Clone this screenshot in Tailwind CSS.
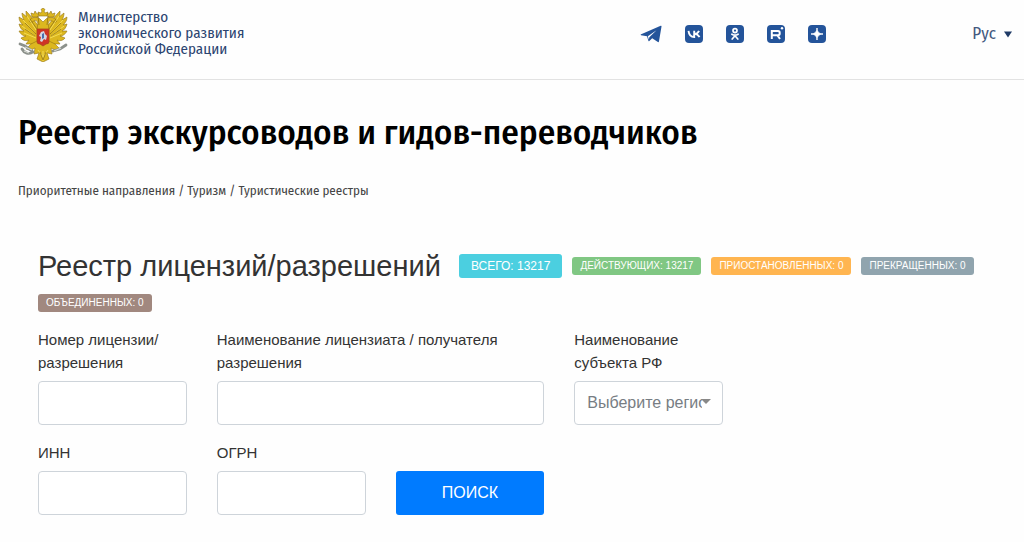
<!DOCTYPE html>
<html lang="ru">
<head>
  <meta charset="utf-8">
  <meta name="viewport" content="width=device-width, initial-scale=1">
  <title>Реестр экскурсоводов и гидов-переводчиков</title>
  <script src="https://cdn.jsdelivr.net/npm/@tailwindcss/browser@4"></script>
</head>
<body class="min-h-screen bg-[#fefefe] font-['Liberation_Sans',Arial,sans-serif] text-[#333]">

  <!-- Header -->
  <header class="flex h-20 items-start justify-between border-b border-[#e2e2e2] pr-3 pl-[18px] font-['Fira_Sans_Condensed','Fira_Sans','Noto_Sans',sans-serif]">
    <a href="#" class="flex items-start gap-2.5 pt-2 text-[#2b4470]">
      <svg class="h-[54px] w-[50px]" viewBox="0 0 50 54" aria-hidden="true">
        <g fill="#dcb71f" stroke="#937314" stroke-width=".6">
          <path d="M21 19C17 13 13 8 8 3C8 6 8 7 9 9L4 5C4 8 5 10 6 12L1 9C1 13 3 15 5 17L1 16C2 20 4 22 6 23L1 23C3 27 6 28 8 28L3 30C5 33 9 33 11 32L8 36L14 36L21 34Z"/>
          <path d="M29 19C33 13 37 8 42 3C42 6 42 7 41 9L46 5C46 8 45 10 44 12L49 9C49 13 47 15 45 17L49 16C48 20 46 22 44 23L49 23C47 27 44 28 42 28L47 30C45 33 41 33 39 32L42 36L36 36L29 34Z"/>
          <path d="M19 33L13 36L8 41L13 42L17 40L16 46L21 45L19 51L25 54L31 51L29 45L34 46L33 40L37 42L42 41L37 36L31 33Z"/>
          <path d="M20 24C18 19 21 16 19 13C17 12 15 13 13 15L11 13C13 9 19 8 22 11L25 14L28 11C31 8 37 9 39 13L37 15C35 13 33 12 31 13C29 16 32 19 30 24Z"/>
          <path d="M14 9L13 5L16 6L17 3L19 6L21 5L20 9ZM36 9L37 5L34 6L33 3L31 6L29 5L30 9Z"/>
          <path d="M21 8L20 4L23 5L24 3L23 1.500L25 0L27 1.500L26 3L27 5L30 4L29 8Z"/>
        </g>
        <g fill="none" stroke="#f4dc55" stroke-width="1">
          <path d="M9 8L18 22M5 12L17 25M4 18L17 28M6 25L18 30M41 8L32 22M45 12L33 25M46 18L33 28M44 25L32 30M20 42L25 49L30 42M25 43V53"/>
        </g>
        <g fill="none" stroke="#8a6b12" stroke-width=".7">
          <path d="M12 11L19 21M7 15L18 26M7 21L17 28M38 11L31 21M43 15L32 26M43 21L33 28M22 44L25 52L28 44M20 8L21 17M30 8L29 17"/>
        </g>
        <g fill="none" stroke="#8c918c" stroke-width="2.800" stroke-linecap="round">
          <path d="M2 36L7 38L14 43M4 41C6 45 11 47 15 44M48 37L42 41L35 43"/>
        </g>
        <path d="M7 39L14 42M43 40L36 43M6 43L11 45" stroke="#d5d8d2" stroke-width="1.200"/>
        <path d="M19 21H31V34Q31 36 28 36L25 38L22 36Q19 36 19 34Z" fill="#cf3426" stroke="#a8471e" stroke-width=".8"/>
        <path d="M23 24L26 23L27 26L29 28L28 32L26 31L24 34L22 33L23 29L21 28Z" fill="#d2d7e3"/>
        <path d="M24 26L26 25V30L24 31Z" fill="#4b6fae"/>
      </svg>
      <span class="pt-px text-[15px] leading-4">Министерство<br>экономического развития<br>Российской Федерации</span>
    </a>

    <div class="flex items-center gap-[146px] pt-[22px]">
      <nav class="flex items-center gap-[23px] text-[#24549a]" aria-label="Социальные сети">
        <a href="#" aria-label="Telegram">
          <svg class="h-[18px] w-[22px]" viewBox="0 0 22 18" fill="currentColor"><path d="M.6 9.400L20.700.8Q21.700.4 21.500 1.500L19 16.300Q18.700 17.700 17.500 16.800L12.200 13.200L9.300 16Q8.500 16.600 8.300 15.500L7 11.300L1 10.300Z"/><path d="M7.800 11.200L16.500 5.200L9.300 12.200L8.900 14.800" fill="#fefefe"/></svg>
        </a>
        <a href="#" aria-label="ВКонтакте">
          <svg class="size-[18px]" viewBox="0 0 18 18"><rect width="18" height="18" rx="4" fill="currentColor"/><path d="M3.500 5.800C4 9.800 6 12 9.200 12V5.800M14 5.800C13 8 11.800 8.900 9.400 8.900C12 8.900 13.500 10.200 14.500 12.200" fill="none" stroke="#fff" stroke-width="1.900"/></svg>
        </a>
        <a href="#" aria-label="Одноклассники">
          <svg class="size-[18px]" viewBox="0 0 18 18"><rect width="18" height="18" rx="4" fill="currentColor"/><g fill="none" stroke="#fff" stroke-width="1.700" stroke-linecap="round"><circle cx="9" cy="5.600" r="2"/><path d="M5.900 9.200Q9 11.200 12.100 9.200M9 10.800L6.200 14M9 10.800L11.800 14"/></g></svg>
        </a>
        <a href="#" aria-label="Rutube">
          <svg class="size-[18px]" viewBox="0 0 18 18"><rect width="18" height="18" rx="4" fill="currentColor"/><path d="M4.800 14V6H11Q12.700 6 12.700 7.700V8.500Q12.700 10.200 11 10.200H5M10.300 10.200L13 14" fill="none" stroke="#fff" stroke-width="2"/><circle cx="15" cy="3.200" r="1.200" fill="#fff"/></svg>
        </a>
        <a href="#" aria-label="Дзен">
          <svg class="size-[18px]" viewBox="0 0 18 18"><rect width="18" height="18" rx="4" fill="currentColor"/><path d="M9 3C9.200 7 11 8.800 15 9C11 9.200 9.200 11 9 15C8.800 11 7 9.200 3 9C7 8.800 8.800 7 9 3Z" fill="#fff" stroke="#fff" stroke-width=".9"/></svg>
        </a>
      </nav>
      <button type="button" class="flex items-center gap-2 text-[17px] leading-6 text-[#44597f]">
        Рус
        <svg class="h-[7px] w-2" viewBox="0 0 8 7" fill="#1f3a66"><path d="M0 .5H8L4 6.500Z"/></svg>
      </button>
    </div>
  </header>

  <main>
    <div class="px-[18px] pt-7 font-['Fira_Sans_Condensed','Fira_Sans','Noto_Sans',sans-serif]">
      <h1 class="text-[35px] leading-12 font-medium text-black">Реестр экскурсоводов и гидов-переводчиков</h1>
      <nav class="pt-[25px] text-[13px] leading-5 text-[#444]" aria-label="Навигация">
        <a href="#">Приоритетные направления</a> / <a href="#">Туризм</a> / <a href="#">Туристические реестры</a>
      </nav>
    </div>

    <!-- Registry -->
    <section class="px-[38px] pt-[45px]">
      <div class="flex flex-wrap items-center gap-x-2.5 gap-y-2 text-[10px] leading-[18px] text-white">
        <h2 class="pr-2 text-[29px] leading-10 text-[#333]">Реестр лицензий/разрешений</h2>
        <span class="rounded-[3px] bg-[#4bcfe0] px-3 text-xs leading-6">ВСЕГО: 13217</span>
        <span class="rounded-[3px] bg-[#80c783] px-2">ДЕЙСТВУЮЩИХ: 13217</span>
        <span class="rounded-[3px] bg-[#ffb550] px-2">ПРИОСТАНОВЛЕННЫХ: 0</span>
        <span class="rounded-[3px] bg-[#90a4ae] px-2">ПРЕКРАЩЕННЫХ: 0</span>
        <span class="rounded-[3px] bg-[#a1887f] px-2">ОБЪЕДИНЕННЫХ: 0</span>
      </div>

      <form class="grid max-w-[685px] grid-cols-4 gap-x-[30px] gap-y-4 pt-4 text-[15px] leading-[23px]">
        <div class="flex flex-col gap-[7px]">
          <label for="number">Номер лицензии/<br>разрешения</label>
          <input id="number" type="text" class="h-11 w-full rounded border border-[#ced4da] bg-white px-3">
        </div>
        <div class="col-span-2 flex flex-col gap-[7px]">
          <label for="name">Наименование лицензиата / получателя разрешения</label>
          <input id="name" type="text" class="h-11 w-full rounded border border-[#ced4da] bg-white px-3">
        </div>
        <div class="flex flex-col gap-[7px]">
          <label for="region">Наименование субъекта РФ</label>
          <div class="relative">
            <select id="region" class="h-11 w-full appearance-none rounded border border-[#ced4da] bg-white pr-5 pl-3 text-base text-[#777d83]">
              <option>Выберите регион</option>
            </select>
            <svg class="pointer-events-none absolute top-[18px] right-3 h-[5px] w-2.5" viewBox="0 0 10 5" fill="#888"><path d="M0 0H10L5 5Z"/></svg>
          </div>
        </div>
        <div class="flex flex-col gap-[7px]">
          <label for="inn">ИНН</label>
          <input id="inn" type="text" class="h-11 w-full rounded border border-[#ced4da] bg-white px-3">
        </div>
        <div class="flex flex-col gap-[7px]">
          <label for="ogrn">ОГРН</label>
          <input id="ogrn" type="text" class="h-11 w-full rounded border border-[#ced4da] bg-white px-3">
        </div>
        <button type="submit" class="h-11 self-end rounded-[3px] bg-[#007bff] text-base text-white">ПОИСК</button>
      </form>
    </section>
  </main>
</body>
</html>
